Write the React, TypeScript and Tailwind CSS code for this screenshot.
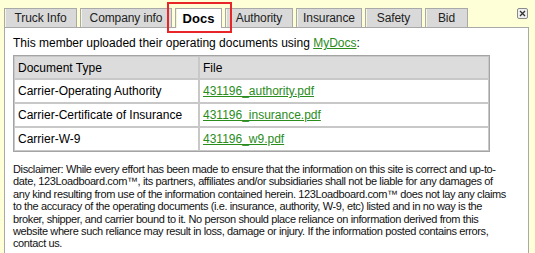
import type { FC } from 'react';

const tabs = [
  { label: 'Truck Info', width: 'w-[73px]' },
  { label: 'Company info', width: 'w-[92px]' },
  { label: 'Docs', width: 'w-[47px]', active: true },
  { label: 'Authority', width: 'w-[68px]' },
  { label: 'Insurance', width: 'w-[66px]' },
  { label: 'Safety', width: 'w-[57px]' },
  { label: 'Bid', width: 'w-[43px]' },
];

const docs = [
  { type: 'Carrier-Operating Authority', file: '431196_authority.pdf' },
  { type: 'Carrier-Certificate of Insurance', file: '431196_insurance.pdf' },
  { type: 'Carrier-W-9', file: '431196_w9.pdf' },
];

const Tab: FC<{ label: string; width: string; active?: boolean }> = ({ label, width, active }) => {
  if (active) {
    return (
      <div className="relative">
        <div
          className={`${width} -mb-px flex h-[20px] items-center justify-center border border-b-0 border-[#a9a9a9] bg-white text-[13px] font-bold text-black shadow-[inset_1px_0_0_#f4f4d0]`}
        >
          {label}
        </div>
        {/* red highlight box drawn over the active tab */}
        <div className="pointer-events-none absolute -top-[6px] -left-[8px] h-[31px] w-[65px] border-2 border-[#e8262a]" />
      </div>
    );
  }

  return (
    <div
      className={`${width} flex h-[19px] items-center justify-center border border-b-0 border-[#a9a9a9] bg-[#d9d9d9] text-[12px] tracking-[-0.1px] text-[#222] shadow-[inset_1px_0_0_#f6f6d8]`}
    >
      {label}
    </div>
  );
};

export default function App() {
  return (
    <div className="h-[253px] w-[535px] bg-[#ffffd7] pt-[8px] pl-[4px] font-['Liberation_Sans',Arial,sans-serif] text-black">
      <div className="flex items-end justify-between pr-[7px]">
        <div className="flex items-end gap-[3px]">
          {tabs.map((tab) => (
            <Tab key={tab.label} {...tab} />
          ))}
        </div>
        <button className="mb-[8px] flex h-[11px] w-[11px] items-center justify-center rounded-[2px] border border-[#8a8a8a] bg-[#f0f0f0]">
          <svg width="7" height="7" viewBox="0 0 7 7">
            <path d="M1 1 L6 6 M6 1 L1 6" stroke="#333" strokeWidth="1.3" />
          </svg>
        </button>
      </div>

      <div className="w-[525px] border border-[#a9a9a9] bg-white px-[8px] pt-[8px] pb-[4px]">
        <p className="text-[12px] leading-[14px]">
          This member uploaded their operating documents using{' '}
          <a href="#" className="text-[#2a8c1c] underline">
            MyDocs
          </a>
          :
        </p>

        <table className="mt-[5px] w-[477px] border-separate border-spacing-0 border border-[#a4a4a4] text-[12px]">
          <thead>
            <tr className="bg-[#dcdcdc]">
              <th className="h-[23px] w-[185px] border border-[#c8c8c8] px-[3px] text-left font-normal">
                Document Type
              </th>
              <th className="h-[23px] border border-[#c8c8c8] px-[3px] text-left font-normal">File</th>
            </tr>
          </thead>
          <tbody>
            {docs.map((doc) => (
              <tr key={doc.file}>
                <td className="h-[24px] border border-[#c8c8c8] px-[3px]">{doc.type}</td>
                <td className="h-[24px] border border-[#c8c8c8] px-[3px]">
                  <a href="#" className="text-[#2a8c1c] underline">
                    {doc.file}
                  </a>
                </td>
              </tr>
            ))}
          </tbody>
        </table>

        <p className="mt-[11px] pr-[10px] text-[11px] leading-[12.4px] tracking-[-0.38px] text-[#111]">
          Disclaimer: While every effort has been made to ensure that the information on this site is correct and
          up-to-date, 123Loadboard.com™, its partners, affiliates and/or subsidiaries shall not be liable for any
          damages of any kind resulting from use of the information contained herein. 123Loadboard.com™ does not lay
          any claims to the accuracy of the operating documents (i.e. insurance, authority, W-9, etc) listed and in no
          way is the broker, shipper, and carrier bound to it. No person should place reliance on information derived
          from this website where such reliance may result in loss, damage or injury. If the information posted
          contains errors, contact us.
        </p>
      </div>
    </div>
  );
}
